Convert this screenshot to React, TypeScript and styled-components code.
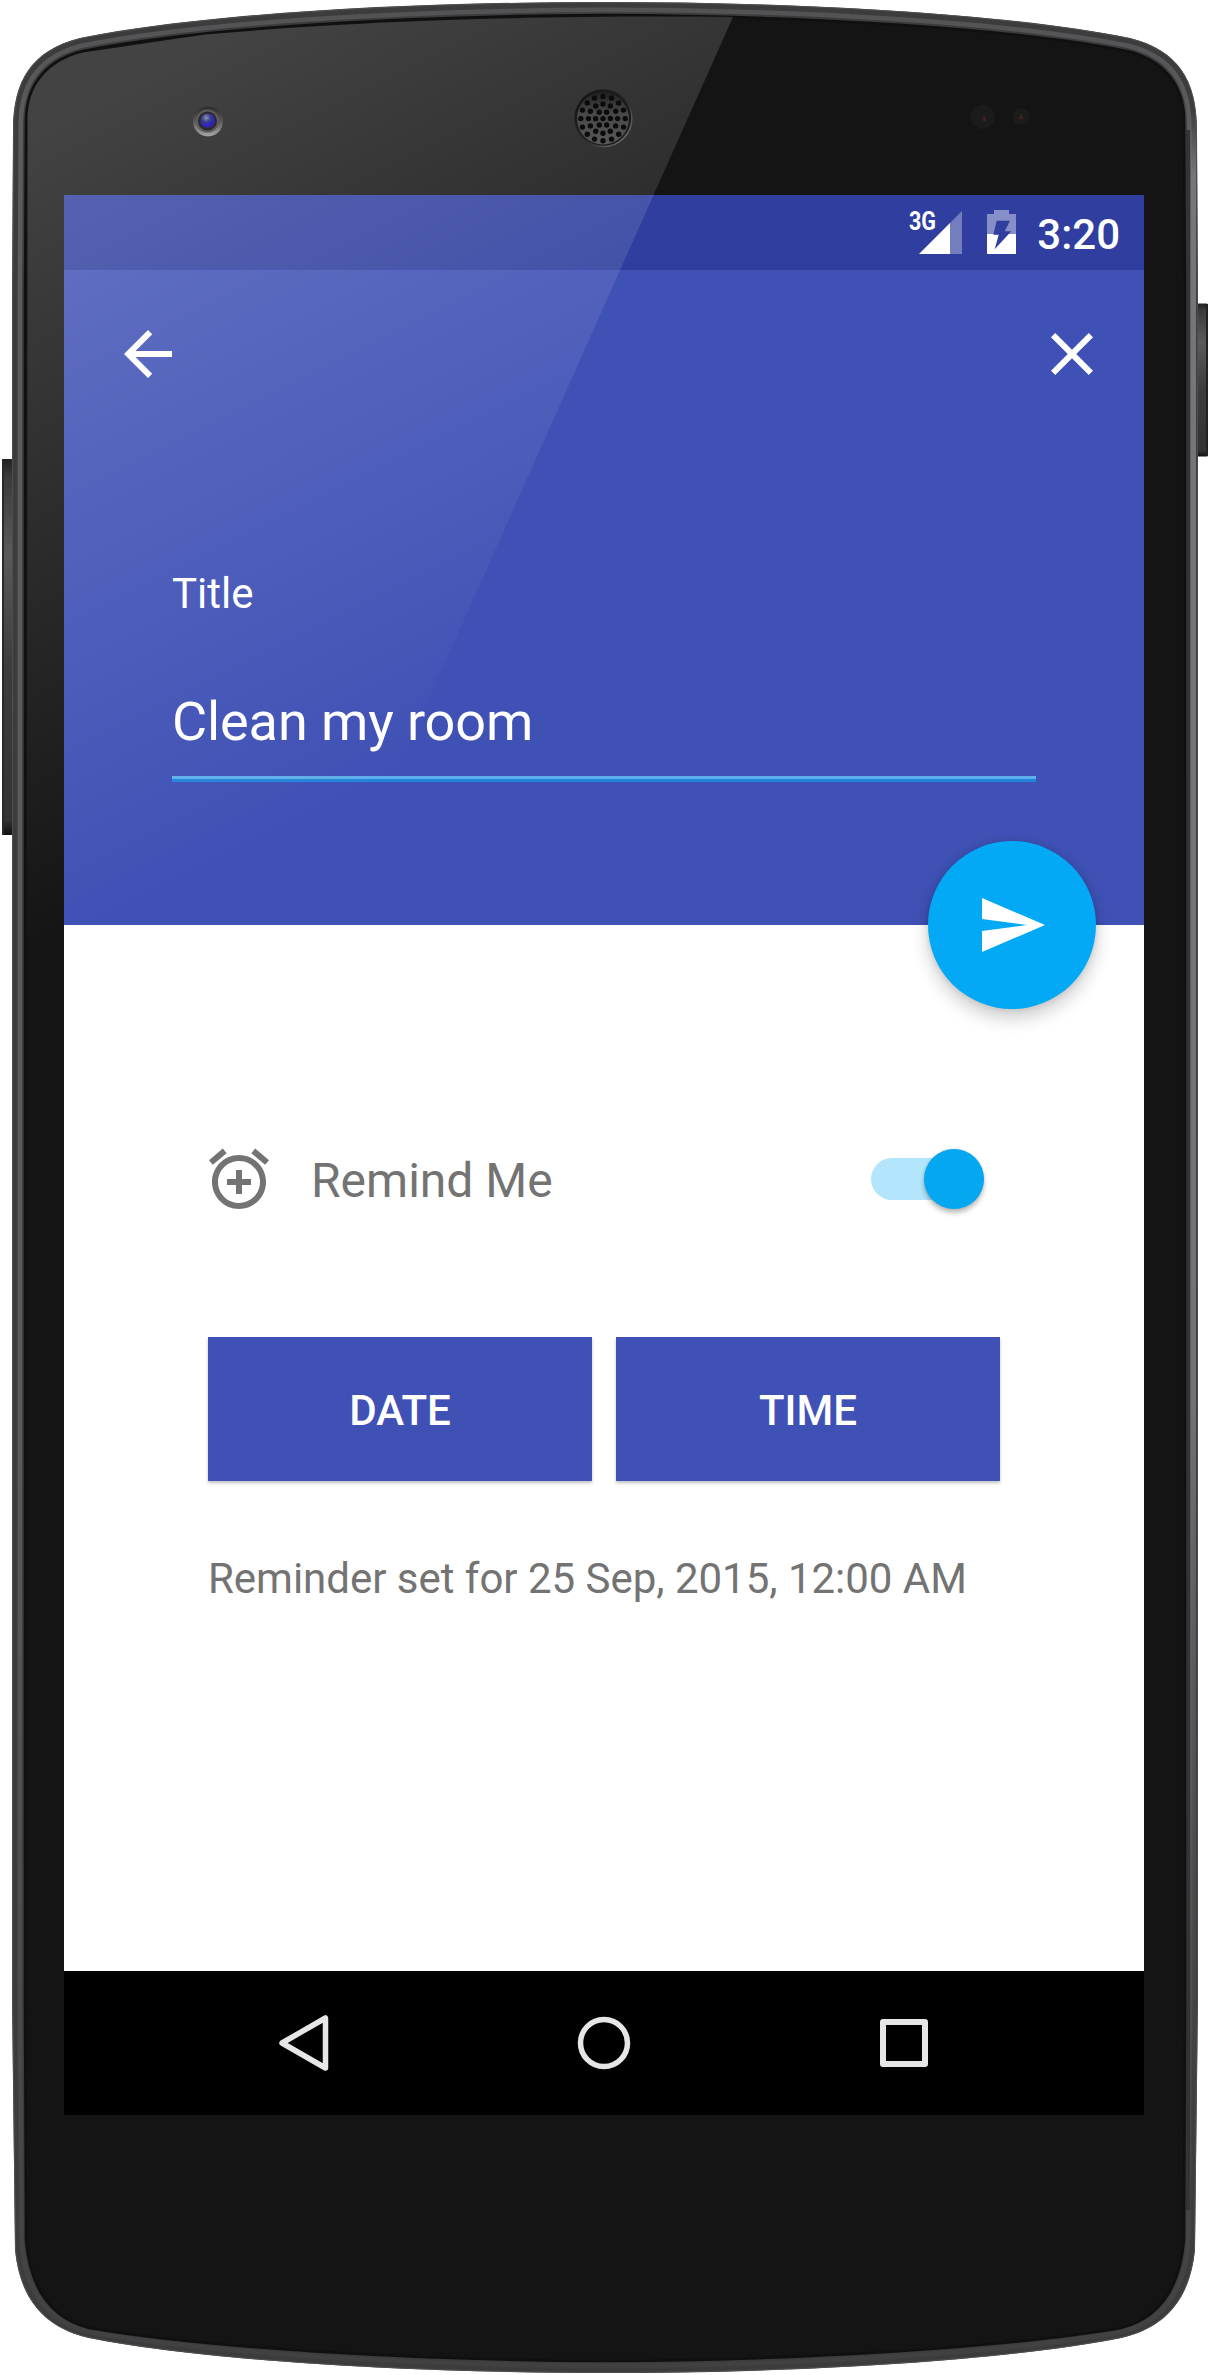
import React from "react";
import styled, { createGlobalStyle } from "styled-components";

const GlobalStyle = createGlobalStyle`
  *, *::before, *::after { box-sizing: border-box; }
  body { margin: 0; background: #fff; }
`;

const indigo = "#3f51b5";
const indigoDark = "#303f9f";
const accent = "#03a9f4";
const secondaryText = "#737373";

const Device = styled.main`
  position: relative;
  width: 1210px;
  height: 2375px;
  padding: 195px 66px 260px 64px;
  overflow: hidden;
  font-family: Roboto, "Noto Sans", sans-serif;
`;

const DeviceArt = styled.svg`
  position: absolute;
  inset: 0;
  display: block;
  pointer-events: none;
`;

const Screen = styled.div`
  position: relative;
  display: flex;
  flex-direction: column;
  width: 1080px;
  height: 1920px;
  background: #fff;
`;

const StatusBar = styled.div`
  flex: none;
  display: flex;
  justify-content: flex-end;
  align-items: flex-start;
  height: 75px;
  padding: 0 24px 0 0;
  background: ${indigoDark};
  color: #fff;
`;

const Signal = styled.div`
  position: relative;
  width: 54px;
  height: 44px;
  margin: 16px 25px 0 0;
  display: flex;
  justify-content: flex-end;
`;

const NetworkType = styled.span`
  position: absolute;
  left: 1px;
  top: -4px;
  font-size: 25px;
  font-weight: 700;
  line-height: 30px;
  transform: scaleX(0.86);
  transform-origin: left center;
`;

const Battery = styled.svg`
  display: block;
  margin: 15px 20px 0 0;
`;

const Clock = styled.span`
  font-size: 42px;
  font-weight: 500;
  line-height: 50px;
  margin-top: 15px;
`;

const Header = styled.header`
  position: relative;
  flex: none;
  height: 655px;
  background: ${indigo};
  color: #fff;
`;

const Toolbar = styled.div`
  display: flex;
  justify-content: space-between;
  align-items: center;
  height: 168px;
  padding: 0 36px 0 48px;
`;

const IconButton = styled.button`
  display: flex;
  padding: 0;
  border: 0;
  background: none;
  color: inherit;
`;

const TitleForm = styled.div`
  display: flex;
  flex-direction: column;
  padding: 131px 108px 0;
`;

const FieldLabel = styled.label`
  font-size: 42px;
  line-height: 50px;
`;

const FieldValue = styled.div`
  margin-top: 71px;
  padding-bottom: 22px;
  font-size: 54px;
  line-height: 64px;
  letter-spacing: -0.1px;
`;

const Underline = styled.div`
  height: 6px;
  background: linear-gradient(#5fb0ea 0 3px, #2384dc 3px);
`;

const Fab = styled.button`
  position: absolute;
  right: 48px;
  bottom: -84px;
  display: flex;
  align-items: center;
  justify-content: center;
  width: 168px;
  height: 168px;
  padding: 0;
  border: 0;
  border-radius: 50%;
  background: ${accent};
  color: #fff;
  box-shadow: 0 9px 18px rgba(0, 0, 0, 0.2), 0 0 6px rgba(0, 0, 0, 0.12);
`;

const Body = styled.section`
  flex: 1;
  display: flex;
  flex-direction: column;
  padding: 218px 144px 0;
  color: ${secondaryText};
`;

const ReminderRow = styled.div`
  display: flex;
  align-items: center;
  height: 72px;
  padding-right: 16px;
  margin-left: -5px;
`;

const ReminderLabel = styled.span`
  flex: 1;
  margin-left: 36px;
  padding-top: 3px;
  font-size: 48px;
  line-height: 56px;
`;

const Switch = styled.button`
  display: flex;
  align-items: center;
  justify-content: flex-end;
  width: 113px;
  height: 42px;
  padding: 0;
  border: 0;
  border-radius: 21px;
  background: #b3e5fc;
`;

const Thumb = styled.span`
  flex: none;
  width: 60px;
  height: 60px;
  margin-top: -1px;
  border-radius: 50%;
  background: #05a7f1;
  box-shadow: 0 4px 5px rgba(0, 0, 0, 0.26), 0 0 3px rgba(0, 0, 0, 0.1);
`;

const ButtonRow = styled.div`
  display: flex;
  gap: 24px;
  margin-top: 122px;
`;

const RaisedButton = styled.button`
  flex: 1;
  height: 144px;
  padding: 3px 0 0;
  border: 0;
  background: ${indigo};
  color: #fff;
  font: 500 42px/50px Roboto, "Noto Sans", sans-serif;
  box-shadow: 0 2px 3px rgba(0, 0, 0, 0.25);
`;

const ReminderText = styled.p`
  margin: 73px 0 0;
  font-size: 42px;
  line-height: 50px;
  letter-spacing: -0.02px;
  white-space: nowrap;
`;

const NavBar = styled.nav`
  flex: none;
  display: flex;
  justify-content: center;
  gap: 228px;
  align-items: center;
  height: 144px;
  background: #000;
  color: #e6e6e6;
`;

const MaterialIcon = ({ d }: { d: string }) => (
  <svg width="72" height="72" viewBox="0 0 24 24" fill="currentColor">
    <path d={d} />
  </svg>
);

const NavIcon = ({ children }: { children: React.ReactNode }) => (
  <svg width="72" height="72" viewBox="0 0 72 72" fill="none" stroke="currentColor" strokeWidth="6" strokeLinejoin="round">
    {children}
  </svg>
);

type Pt = [number, number];

// Left half of the body outline, from the top centre round to the bottom centre.
const outer: Pt[] = [
  [605, 2], [400, 2], [200, 14], [80, 38], [32, 50], [13, 80], [13, 130],
  [12, 300], [12, 2000], [15, 2250], [20, 2300], [45, 2328], [89, 2338],
  [200, 2360], [400, 2373], [605, 2373],
];
const inner: Pt[] = [
  [605, 15], [400, 16], [200, 28], [83, 51], [46, 60], [27, 85], [26, 118],
  [25, 300], [25, 2000], [26, 2240], [30, 2288], [50, 2318], [89, 2328],
  [200, 2347], [400, 2360], [605, 2361],
];

const outline = (t: number) => {
  const p = outer.map(([x, y], i): Pt => [x + (inner[i][0] - x) * t, y + (inner[i][1] - y) * t]);
  const m = p.map(([x, y]): Pt => [1210 - x, y]);
  const c = (a: Pt, b: Pt, e: Pt) => `C${a} ${b} ${e}`;
  return [
    `M${p[0]}`,
    c(p[1], p[2], p[3]), c(p[4], p[5], p[6]),
    `L${p[7]} L${p[8]} L${p[9]}`,
    c(p[10], p[11], p[12]), c(p[13], p[14], p[15]),
    c(m[14], m[13], m[12]), c(m[11], m[10], m[9]),
    `L${m[8]} L${m[7]} L${m[6]}`,
    c(m[5], m[4], m[3]), c(m[2], m[1], m[0]), "Z",
  ].join(" ");
};

const ring = (count: number, radius: number) =>
  Array.from({ length: count }, (_, i): Pt => {
    const a = (i / count) * Math.PI * 2 + (count === 6 ? 0.52 * 2 : Math.PI / 2);
    return [603 + Math.cos(a) * radius, 118.6 + Math.sin(a) * radius];
  });
const holes: Pt[] = [[603, 118.6], ...ring(6, 7.4), ...ring(12, 14.6), ...ring(16, 22.2)];

const Shell = () => (
  <DeviceArt width="1210" height="2375" viewBox="0 0 1210 2375">
    <defs>
      <linearGradient id="rim" x1="0" y1="0" x2="0" y2="1">
        <stop offset="0" stopColor="#535356" />
        <stop offset="0.05" stopColor="#5c5c60" />
        <stop offset="0.6" stopColor="#5a5b5e" />
        <stop offset="1" stopColor="#414144" />
      </linearGradient>
      <linearGradient id="rimRight" x1="0" y1="0" x2="0" y2="1">
        <stop offset="0" stopColor="#75767a" stopOpacity="0" />
        <stop offset="0.03" stopColor="#75767a" />
        <stop offset="0.6" stopColor="#727377" />
        <stop offset="1" stopColor="#4c4c4e" stopOpacity="0" />
      </linearGradient>
      <linearGradient id="key" x1="0" y1="0" x2="0" y2="1">
        <stop offset="0" stopColor="#222" />
        <stop offset="0.05" stopColor="#3c3c3c" />
        <stop offset="0.25" stopColor="#5a5a5a" />
        <stop offset="0.55" stopColor="#3d3d3d" />
        <stop offset="0.96" stopColor="#333" />
        <stop offset="1" stopColor="#111" />
      </linearGradient>
    </defs>
    <rect x="2" y="459" width="14" height="376" rx="1.500" fill="url(#key)" />
    <rect x="2" y="459" width="2" height="376" fill="#2a2a2a" />
    <rect x="1194" y="303.500" width="14" height="153" rx="1.500" fill="url(#key)" />
    <rect x="1206" y="304" width="2" height="152" fill="#222" />
    <path d={outline(0)} fill="#3c3c3d" />
    <path d={outline(0.05)} fill="none" stroke="#505052" strokeWidth="1" />
    <path d={outline(0.6)} fill="none" stroke="url(#rim)" strokeWidth="4.500" />
    <rect x="1191" y="110" width="5" height="2130" fill="url(#rimRight)" />
    <rect x="1185" y="130" width="5" height="2080" fill="#343436" />
    <path d={outline(1)} fill="#141414" stroke="#101010" strokeWidth="2.500" />
  </DeviceArt>
);

const Glare = () => (
  <DeviceArt width="1210" height="2375" viewBox="0 0 1210 2375">
    <defs>
      <linearGradient id="glare" gradientUnits="userSpaceOnUse" x1="60" y1="119" x2="393" y2="780">
        <stop offset="0" stopColor="#fff" stopOpacity="0.2" />
        <stop offset="1" stopColor="#fff" stopOpacity="0" />
      </linearGradient>
      <linearGradient id="cameraRim" x1="0" y1="0" x2="0" y2="1">
        <stop offset="0" stopColor="#2c2c2c" />
        <stop offset="0.5" stopColor="#5a5958" />
        <stop offset="1" stopColor="#a9a7a5" />
      </linearGradient>
      <radialGradient id="lens" cx="0.4" cy="0.3" r="0.75">
        <stop offset="0" stopColor="#8d99a5" />
        <stop offset="0.4" stopColor="#3a3c8c" />
        <stop offset="0.75" stopColor="#2a22c4" />
        <stop offset="1" stopColor="#3c2a70" />
      </radialGradient>
      <linearGradient id="speakerRim" x1="0" y1="0" x2="1" y2="1">
        <stop offset="0" stopColor="#0c0c0c" />
        <stop offset="0.55" stopColor="#2b2b2b" />
        <stop offset="1" stopColor="#858585" />
      </linearGradient>
      <linearGradient id="speakerMesh" x1="0" y1="0" x2="0" y2="1">
        <stop offset="0" stopColor="#222" />
        <stop offset="0.4" stopColor="#484848" />
        <stop offset="1" stopColor="#585858" />
      </linearGradient>
    </defs>
    <path
      d="M733 17 C600 15.500 400 17.500 205 34.500 L83 52.500 C47 61.500 28 86 27.500 118 L26.500 1600 L733 17 Z"
      fill="url(#glare)"
    />
    <circle cx="208" cy="121.500" r="15" fill="url(#cameraRim)" />
    <circle cx="207.500" cy="121" r="11.500" fill="#5d5c5a" />
    <circle cx="207.500" cy="121" r="9.500" fill="#2c2b2b" />
    <circle cx="207.700" cy="120.700" r="7.300" fill="url(#lens)" />
    <circle cx="603.500" cy="118.300" r="28.300" fill="#1b1b1b" stroke="url(#speakerRim)" strokeWidth="1.500" />
    <circle cx="603" cy="118.600" r="26" fill="url(#speakerMesh)" />
    {holes.map(([x, y], i) => (
      <circle key={i} cx={x} cy={y} r="2.700" fill="#0b0b0b" />
    ))}
    <circle cx="982.500" cy="117" r="12" fill="#1b1b1b" />
    <path d="M984 115 l2 6 h-3 z" fill="#4a2517" />
    <circle cx="1021" cy="116.500" r="8.500" fill="#1b1b1b" />
    <path d="M1021 113 l2 6 h-4 z" fill="#45231a" />
  </DeviceArt>
);

export default function App() {
  return (
    <>
      <GlobalStyle />
      <Device>
        <Shell />
        <Screen>
          <StatusBar>
            <Signal>
              <NetworkType>3G</NetworkType>
              <svg width="43" height="44" viewBox="0 0 43 44">
                <path d="M0 43 L31 12 V43 Z" fill="#fff" />
                <path d="M31 12 L43 0 V43 H31 Z" fill="#fff" fillOpacity="0.33" />
              </svg>
            </Signal>
            <Battery width="30" height="44" viewBox="0 0 30 44">
              <path d="M0 4 H7 V0 H22 V4 H29 V24 H0 Z" fill="#fff" fillOpacity="0.42" />
              <rect y="24" width="29" height="20" fill="#fff" />
              <path d="M9.700 10.700 H23 L17.700 21.300 H24.300 L7.700 39.300 L11.700 24.700 H6.300 Z" fill={indigoDark} />
            </Battery>
            <Clock>3:20</Clock>
          </StatusBar>
          <Header>
            <Toolbar>
              <IconButton aria-label="Back">
                <MaterialIcon d="M20 11H7.830l5.590-5.590L12 4l-8 8 8 8 1.410-1.410L7.830 13H20v-2z" />
              </IconButton>
              <IconButton aria-label="Close">
                <MaterialIcon d="M19 6.410L17.590 5 12 10.590 6.410 5 5 6.410 10.590 12 5 17.590 6.410 19 12 13.410 17.590 19 19 17.590 13.410 12z" />
              </IconButton>
            </Toolbar>
            <TitleForm>
              <FieldLabel>Title</FieldLabel>
              <FieldValue>Clean my room</FieldValue>
              <Underline />
            </TitleForm>
            <Fab aria-label="Save">
              <MaterialIcon d="M2.010 21L23 12 2.010 3 2 10l15 2-15 2z" />
            </Fab>
          </Header>
          <Body>
            <ReminderRow>
              <MaterialIcon d="M7.880 3.390L6.600 1.860 2 5.710l1.290 1.530 4.590-3.850zM22 5.720l-4.600-3.860-1.290 1.530 4.600 3.860L22 5.720zM12 4c-4.970 0-9 4.030-9 9s4.020 9 9 9c4.970 0 9-4.030 9-9s-4.030-9-9-9zm0 16c-3.870 0-7-3.130-7-7s3.130-7 7-7 7 3.130 7 7-3.130 7-7 7zm1-11h-2v3H8v2h3v3h2v-3h3v-2h-3V9z" />
              <ReminderLabel>Remind Me</ReminderLabel>
              <Switch role="switch" aria-checked="true">
                <Thumb />
              </Switch>
            </ReminderRow>
            <ButtonRow>
              <RaisedButton>DATE</RaisedButton>
              <RaisedButton>TIME</RaisedButton>
            </ButtonRow>
            <ReminderText>Reminder set for 25 Sep, 2015, 12:00 AM</ReminderText>
          </Body>
          <NavBar>
            <NavIcon>
              <path d="M14 36 L57.500 11 V61 Z" strokeWidth="5.500" />
            </NavIcon>
            <NavIcon>
              <circle cx="36" cy="36" r="23.500" strokeWidth="5.500" />
            </NavIcon>
            <NavIcon>
              <rect x="15" y="15" width="42" height="42" />
            </NavIcon>
          </NavBar>
        </Screen>
        <Glare />
      </Device>
    </>
  );
}
